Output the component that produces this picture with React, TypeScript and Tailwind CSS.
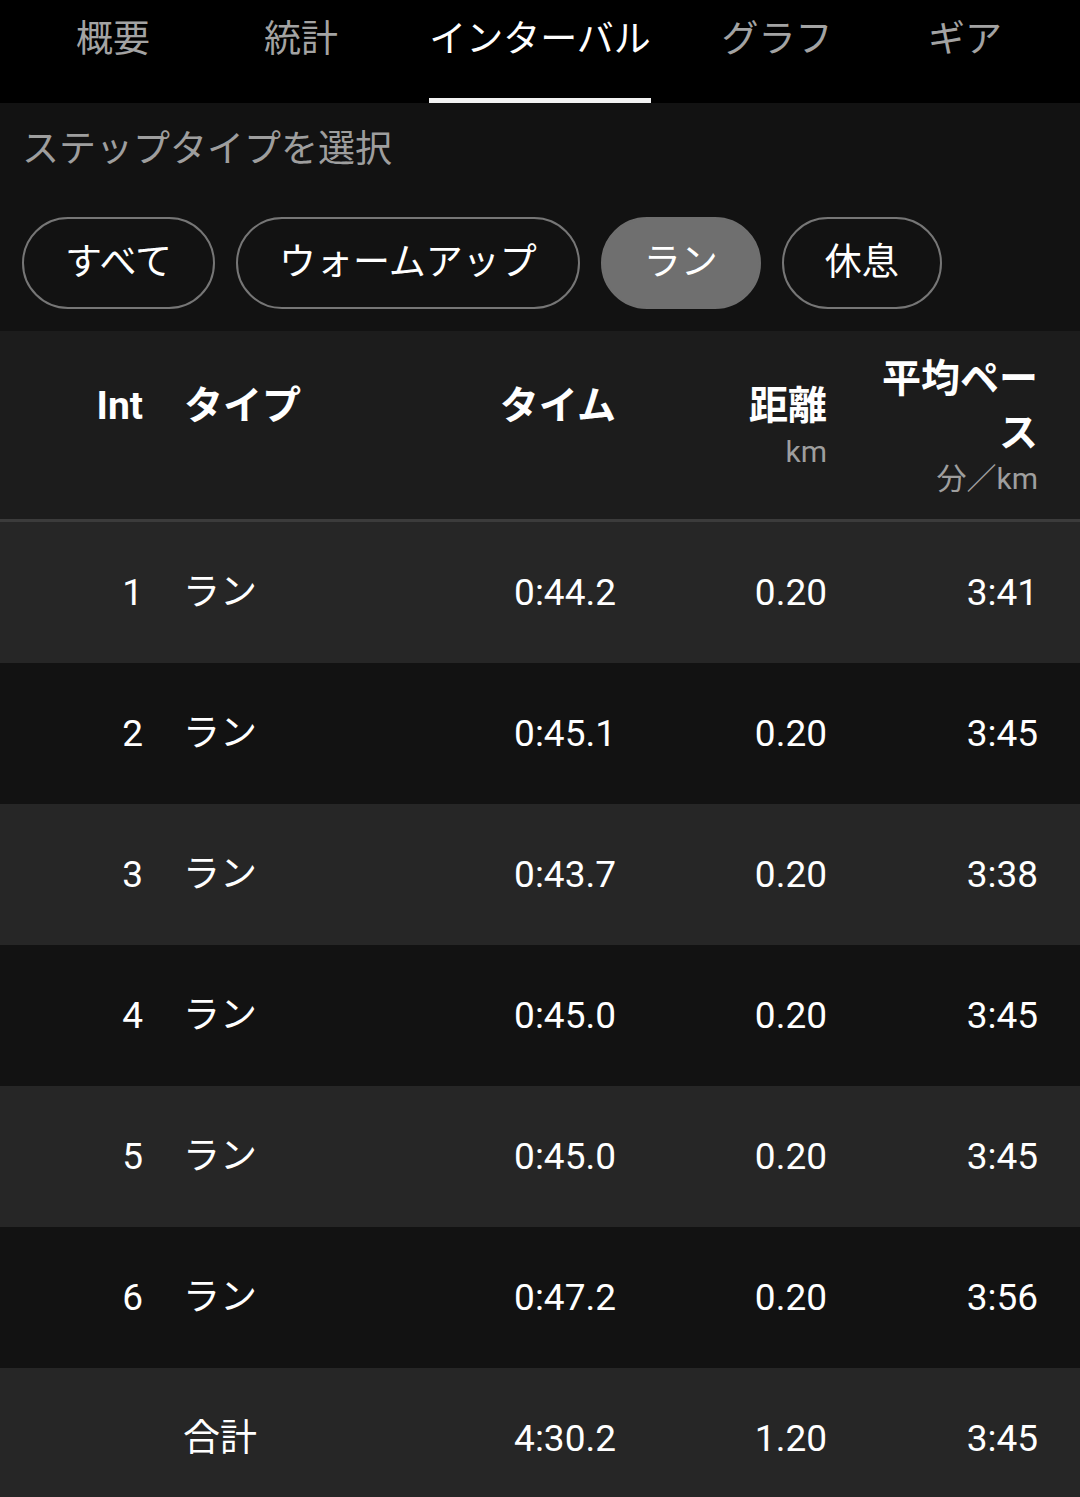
import { useState } from "react";

const tabs = [
    { label: "概要", w: "w-[226px]" },
    { label: "統計", w: "w-[150px]" },
    { label: "インターバル", w: "w-[328px]" },
    { label: "グラフ", w: "w-[146px]" },
    { label: "ギア", w: "w-[230px]" },
];

const chips = ["すべて", "ウォームアップ", "ラン", "休息"];

const laps = [
    { n: "1", type: "ラン", time: "0:44.2", dist: "0.20", pace: "3:41" },
    { n: "2", type: "ラン", time: "0:45.1", dist: "0.20", pace: "3:45" },
    { n: "3", type: "ラン", time: "0:43.7", dist: "0.20", pace: "3:38" },
    { n: "4", type: "ラン", time: "0:45.0", dist: "0.20", pace: "3:45" },
    { n: "5", type: "ラン", time: "0:45.0", dist: "0.20", pace: "3:45" },
    { n: "6", type: "ラン", time: "0:47.2", dist: "0.20", pace: "3:56" },
];

const cols = "grid grid-cols-[143px_243px_230px_211px_211px]";

export default function App() {
    const [activeTab, setActiveTab] = useState("インターバル");
    const [activeChip, setActiveChip] = useState("ラン");

    return (
        <div className="min-h-screen bg-[#121212] text-white font-['Roboto','Noto_Sans_CJK_JP',sans-serif] overflow-hidden">
            {/* Tabs */}
            <div className="h-[103px] bg-black flex">
                {tabs.map((t) => {
                    const active = t.label === activeTab;
                    return (
                        <div key={t.label} className={`${t.w} h-full flex justify-center`}>
                            <button
                                onClick={() => setActiveTab(t.label)}
                                className={`h-full flex flex-col justify-between items-stretch text-[37px] leading-[50px] ${active ? "text-white" : "text-[#a3a3a3]"}`}
                            >
                                <span className="pt-[15px] whitespace-nowrap">{t.label}</span>
                                <span className={`h-[5px] ${active ? "bg-[#f2f2f2]" : "bg-transparent"}`} />
                            </button>
                        </div>
                    );
                })}
            </div>

            {/* Step type filter */}
            <div className="bg-[#121212] px-[22px] pt-[23px] pb-[22px]">
                <p className="text-[37px] leading-[48px] text-[#9e9e9e] whitespace-nowrap">ステップタイプを選択</p>
                <div className="flex gap-[21px] mt-[43px]">
                    {chips.map((c) => {
                        const active = c === activeChip;
                        return (
                            <button
                                key={c}
                                onClick={() => setActiveChip(c)}
                                className={`h-[92px] px-[41px] rounded-full border-2 text-[37px] whitespace-nowrap ${active ? "bg-[#6f6f6f] border-[#6f6f6f]" : "border-[#767676]"}`}
                            >
                                {c}
                            </button>
                        );
                    })}
                </div>
            </div>

            {/* Table header */}
            <div className={`${cols} h-[191px] bg-[#1c1c1c] items-center border-b-[3px] border-[#3b3b3b] font-bold text-[39px] leading-[54px]`}>
                <div className="text-right">
                    <div>Int</div>
                    <div className="h-[38px]" />
                </div>
                <div className="pl-[41px]">
                    <div>タイプ</div>
                    <div className="h-[38px]" />
                </div>
                <div className="text-right">
                    <div>タイム</div>
                    <div className="h-[38px]" />
                </div>
                <div className="text-right">
                    <div>距離</div>
                    <div className="h-[38px] text-[30px] leading-[38px] font-normal text-[#9e9e9e]">km</div>
                </div>
                <div className="text-right">
                    <div className="w-[180px] ml-auto">平均ペース</div>
                    <div className="h-[38px] text-[30px] leading-[38px] font-normal text-[#9e9e9e]">分／km</div>
                </div>
            </div>

            {/* Rows */}
            {laps.map((l, i) => (
                <LapRow key={l.n} {...l} dark={i % 2 === 1} />
            ))}
            <LapRow n="" type="合計" time="4:30.2" dist="1.20" pace="3:45" dark={false} />
        </div>
    );
}

function LapRow({ n, type, time, dist, pace, dark }: { n: string; type: string; time: string; dist: string; pace: string; dark: boolean }) {
    return (
        <div className={`${cols} h-[141px] items-center text-[37px] ${dark ? "bg-[#121212]" : "bg-[#262626]"}`}>
            <div className="text-right">{n}</div>
            <div className="pl-[40px]">{type}</div>
            <div className="text-right">{time}</div>
            <div className="text-right">{dist}</div>
            <div className="text-right">{pace}</div>
        </div>
    );
}
